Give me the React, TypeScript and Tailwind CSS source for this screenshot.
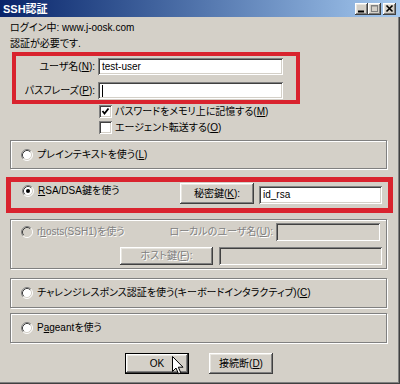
import React from "react";

const RAISED =
  "bg-[#d4d0c8] shadow-[inset_-1px_-1px_#404040,inset_1px_1px_#ffffff,inset_-2px_-2px_#808080,inset_2px_2px_#e8e6e0]";
const SUNKEN =
  "shadow-[inset_1px_1px_#808080,inset_-1px_-1px_#ffffff,inset_2px_2px_#404040,inset_-2px_-2px_#d4d0c8]";
const GROUP = "border border-[#808080] shadow-[inset_1px_1px_#ffffff,1px_1px_#ffffff]";
const DIS = "text-[#808080] [text-shadow:1px_1px_0_#ffffff]";

function Radio({ checked = false, disabled = false }: { checked?: boolean; disabled?: boolean }) {
  return (
    <svg width="12" height="12" viewBox="0 0 12 12" className="shrink-0">
      <circle cx="6" cy="6" r="5" fill={disabled ? "#d4d0c8" : "#ffffff"} />
      <path d="M2.11 9.89 A5.5 5.5 0 0 1 9.89 2.11" stroke="#808080" fill="none" />
      <path d="M9.89 2.11 A5.5 5.5 0 0 1 2.11 9.89" stroke="#ffffff" fill="none" />
      <path d="M2.82 9.18 A4.5 4.5 0 0 1 9.18 2.82" stroke="#404040" fill="none" />
      <path d="M9.18 2.82 A4.5 4.5 0 0 1 2.82 9.18" stroke="#d4d0c8" fill="none" />
      {checked && <circle cx="6" cy="6" r="2" fill="#000000" />}
    </svg>
  );
}

function Check({ checked = false }: { checked?: boolean }) {
  return (
    <div className={`w-[13px] h-[13px] bg-white shrink-0 ${SUNKEN} flex items-center justify-center`}>
      {checked && (
        <svg width="13" height="13" viewBox="0 0 13 13">
          <polyline points="3.5,6 5.5,8.5 9.5,3.5" stroke="#000" strokeWidth="1.8" fill="none" />
        </svg>
      )}
    </div>
  );
}

function TitleBtn({ children }: { children: React.ReactNode }) {
  return (
    <div className={`w-[13px] h-[12px] ${RAISED} flex items-center justify-center`}>
      <svg width="13" height="12" viewBox="0 0 13 12">
        {children}
      </svg>
    </div>
  );
}

export default function App() {
  return (
    <div className="relative w-[400px] h-[384px] overflow-hidden bg-[#d4d0c8] flex flex-col font-['Liberation_Sans','Noto_Sans_CJK_JP',sans-serif] [font-feature-settings:'palt'] text-[10px] leading-[12px] text-black shadow-[inset_-1px_-1px_#404040,inset_-2px_-2px_#808080]">
      {/* title bar */}
      <div className="h-[17px] shrink-0 flex items-center bg-gradient-to-r from-[#0a246a] to-[#a6caf0] pl-[3px] pr-[4px]">
        <span className="text-white font-bold text-[11px] leading-[12px]">SSH認証</span>
        <div className="ml-auto flex items-center">
          <TitleBtn>
            <rect x="3" y="7.5" width="6" height="2" fill="#000" />
          </TitleBtn>
          <TitleBtn>
            <rect x="3.5" y="2.5" width="6" height="6" fill="none" stroke="#808080" />
            <rect x="3" y="2" width="7" height="1.5" fill="#808080" />
          </TitleBtn>
          <div className="w-[2px]" />
          <TitleBtn>
            <path d="M3.5 2.5 L9.5 8.5 M9.5 2.5 L3.5 8.5" stroke="#000" strokeWidth="1.6" />
          </TitleBtn>
        </div>
      </div>

      <div className="mt-[5px] h-[12px] pl-[10px] whitespace-nowrap">ログイン中: www.j-oosk.com</div>
      <div className="mt-[4px] h-[12px] pl-[10px] whitespace-nowrap">認証が必要です.</div>

      {/* red box 1 */}
      <div className="mt-[2px] ml-[12px] w-[288px] h-[52px] border-[4px] border-[#d9232e] flex flex-col">
        <div className="mt-[2px] h-[17px] flex items-center">
          <div className="w-[79px] text-right whitespace-nowrap">
            ユーザ名(<u>N</u>):
          </div>
          <div className={`ml-[3px] w-[185px] h-[17px] bg-white ${SUNKEN} flex items-center pl-[4px]`}>test-user</div>
        </div>
        <div className="mt-[7px] h-[17px] flex items-center">
          <div className="w-[79px] text-right whitespace-nowrap">
            パスフレーズ(<u>P</u>):
          </div>
          <div className={`ml-[3px] w-[185px] h-[17px] bg-white ${SUNKEN} flex items-center pl-[4px]`}>
            <div className="w-[1px] h-[12px] bg-black" />
          </div>
        </div>
      </div>

      <div className="mt-[1px] h-[13px] pl-[99px] flex items-center gap-[3px] whitespace-nowrap">
        <Check checked />
        <span>
          パスワードをメモリ上に記憶する(<u>M</u>)
        </span>
      </div>
      <div className="mt-[3px] h-[13px] pl-[99px] flex items-center gap-[3px] whitespace-nowrap">
        <Check />
        <span>
          エージェント転送する(<u>O</u>)
        </span>
      </div>

      {/* plain text group */}
      <div className={`mt-[6px] ml-[10px] w-[377px] h-[29px] ${GROUP} flex items-center pl-[10px] gap-[4px] whitespace-nowrap`}>
        <Radio />
        <span>
          プレインテキストを使う(<u>L</u>)
        </span>
      </div>

      {/* red box 2 */}
      <div className="mt-[8px] ml-[6px] w-[387px] h-[36px] border-[5px] border-[#d9232e] flex items-start pl-[11px] pr-[6px]">
        <div className="mt-[2px] h-[14px] flex items-center gap-[4px] whitespace-nowrap">
          <Radio checked />
          <span>
            <u>R</u>SA/DSA鍵を使う
          </span>
        </div>
        <div className={`ml-auto mt-[1px] w-[74px] h-[21px] ${RAISED} flex items-center justify-center whitespace-nowrap`}>
          秘密鍵(<u>K</u>):
        </div>
        <div className={`ml-[5px] mt-[4px] w-[123px] h-[18px] bg-white ${SUNKEN} flex items-center pl-[4px]`}>id_rsa</div>
      </div>

      {/* rhosts group */}
      <div className={`mt-[6px] ml-[10px] w-[377px] h-[50px] ${GROUP} flex flex-col`}>
        <div className="mt-[3px] h-[18px] flex items-center pl-[10px] pr-[6px] whitespace-nowrap">
          <Radio disabled />
          <span className={`ml-[4px] ${DIS}`}>
            r<u>h</u>osts(SSH1)を使う
          </span>
          <span className={`ml-auto ${DIS}`}>
            ローカルのユーザ名(<u>U</u>):
          </span>
          <div className={`ml-[3px] w-[104px] h-[18px] bg-[#d4d0c8] ${SUNKEN}`} />
        </div>
        <div className="mt-[6px] h-[18px] flex items-center">
          <div className={`ml-[109px] w-[93px] h-[18px] ${RAISED} flex items-center justify-center whitespace-nowrap ${DIS}`}>
            ホスト鍵(<u>F</u>):
          </div>
          <div className={`ml-[6px] w-[163px] h-[18px] bg-[#d4d0c8] ${SUNKEN}`} />
        </div>
      </div>

      {/* challenge group */}
      <div className={`mt-[9px] ml-[10px] w-[377px] h-[30px] ${GROUP} flex items-center pl-[10px] gap-[4px] whitespace-nowrap`}>
        <Radio />
        <span>
          チャレンジレスポンス認証を使う(キーボードインタラクティブ)(<u>C</u>)
        </span>
      </div>

      {/* pageant group */}
      <div className={`mt-[5px] ml-[10px] w-[377px] h-[30px] ${GROUP} flex items-center pl-[10px] gap-[4px] whitespace-nowrap`}>
        <Radio />
        <span>
          P<u>a</u>geantを使う
        </span>
      </div>

      {/* buttons */}
      <div className="mt-[10px] h-[21px] flex items-center pl-[125px] gap-[20px]">
        <div className="w-[64px] h-[21px] border border-black">
          <div className={`w-full h-full ${RAISED} flex items-center justify-center`}>OK</div>
        </div>
        <div className={`w-[64px] h-[21px] ${RAISED} flex items-center justify-center whitespace-nowrap`}>
          接続断(<u>D</u>)
        </div>
      </div>

      {/* mouse cursor */}
      <svg className="absolute left-[172px] top-[356px]" width="13" height="20" viewBox="0 0 13 20">
        <path d="M0.5 0.5 L0.5 15.5 L4 12 L6.5 17.8 L8.8 16.8 L6.3 11.2 L11 11.2 Z" fill="#fff" stroke="#000" strokeLinejoin="miter" />
      </svg>
    </div>
  );
}
